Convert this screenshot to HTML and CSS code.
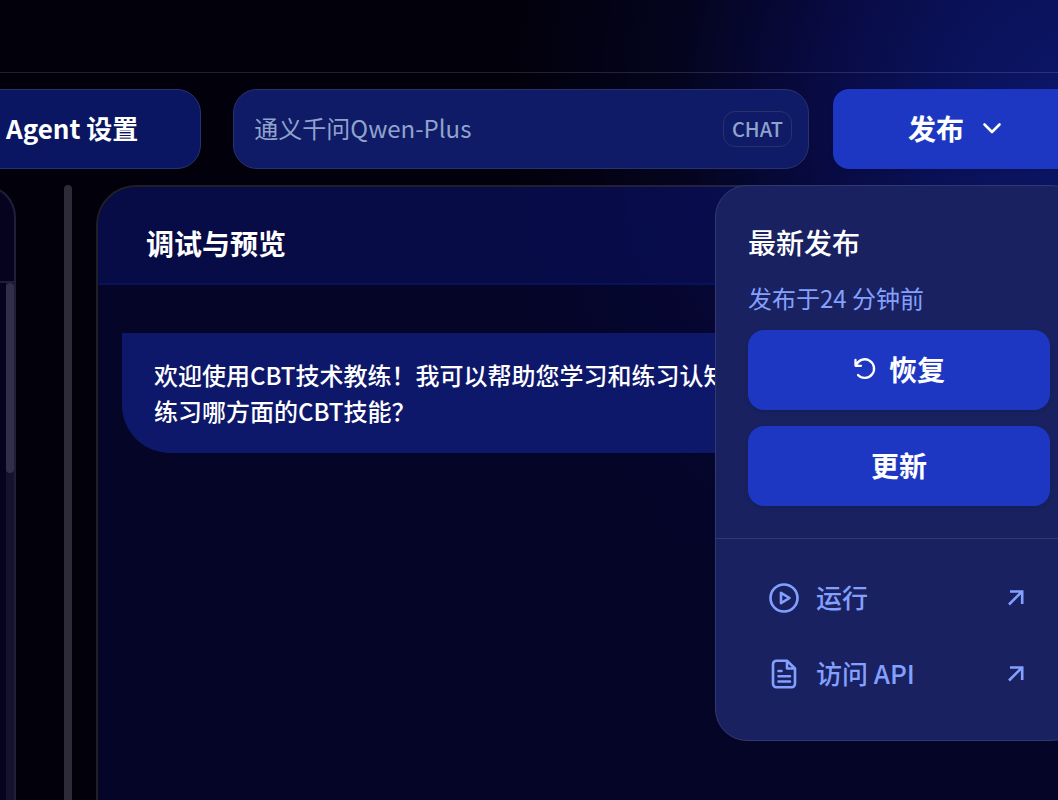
FILE: index.html
```
<!DOCTYPE html>
<html lang="zh-CN">
<head>
  <meta charset="UTF-8">
  <meta name="viewport" content="width=device-width, initial-scale=1">
  <title>调试与预览</title>
  <link rel="stylesheet" href="styles.css">
</head>
<body>
  <div class="app">
    <header class="topbar"></header>

    <div class="toolbar">
      <button type="button" class="agent-btn">Agent 设置</button>

      <button type="button" class="model-select" aria-haspopup="listbox">
        <span class="model-name">通义千问Qwen-Plus</span>
        <span class="badge">CHAT</span>
      </button>

      <div class="publish">
        <button type="button" class="btn publish-btn" aria-expanded="true">
          发布
          <svg class="icon-sm" viewBox="0 0 24 24" aria-hidden="true"><path d="M4.500 8.500l7.500 7.500 7.500-7.500" stroke-width="2.600"/></svg>
        </button>

        <div class="menu">
          <section class="menu-top">
            <h3>最新发布</h3>
            <p>发布于24 分钟前</p>
            <button type="button" class="btn">
              <svg class="icon-sm" viewBox="0 0 24 24" aria-hidden="true"><path d="M2.500 3v5.800h5.500M3 8.500A9.300 9.300 0 1 1 5 18" stroke-width="2.300"/></svg>
              恢复
            </button>
            <button type="button" class="btn">更新</button>
          </section>
          <nav class="menu-links">
            <a href="#">
              <svg class="icon" viewBox="0 0 32 32" aria-hidden="true"><circle cx="16" cy="16" r="13.500"/><path d="M13 10.800v10.400l8.500-5.200z"/></svg>
              <span>运行</span>
              <svg class="icon-arrow" viewBox="0 0 28 28" aria-hidden="true"><path d="M7 20.500L19.500 8M8 7.500h12.200v12.500"/></svg>
            </a>
            <a href="#">
              <svg class="icon" viewBox="0 0 32 32" aria-hidden="true"><path d="M19 2.700H8.500a3.500 3.500 0 0 0-3.500 3.500v19.600a3.500 3.500 0 0 0 3.500 3.500h15a3.500 3.500 0 0 0 3.500-3.500V10.500zM19 2.700V10.500h8M10.500 13h3M10.500 18.200h11.500M10.500 23.500h11.500"/></svg>
              <span>访问 API</span>
              <svg class="icon-arrow" viewBox="0 0 28 28" aria-hidden="true"><path d="M7 20.500L19.500 8M8 7.500h12.200v12.500"/></svg>
            </a>
          </nav>
        </div>
      </div>
    </div>

    <main class="workspace">
      <aside class="config">
        <div class="config-head"></div>
        <div class="config-body">
          <div class="scroll-track"><div class="scroll-thumb"></div></div>
        </div>
      </aside>

      <div class="splitter"></div>

      <section class="preview">
        <h2 class="preview-head">调试与预览</h2>
        <div class="chat">
          <p class="bubble">欢迎使用CBT技术教练！我可以帮助您学习和练习认知<br>练习哪方面的CBT技能？</p>
        </div>
      </section>
    </main>
  </div>
</body>
</html>
```

FILE: styles.css
```
* {
  box-sizing: border-box;
}

body {
  margin: 0;
  font-family: "Noto Sans CJK SC", sans-serif;
  background-color: #02000a;
  color: #fff;
  overflow: hidden;
}

h2, h3, p {
  margin: 0;
}

button {
  font-family: inherit;
  color: inherit;
  cursor: pointer;
}

svg {
  flex: none;
  fill: none;
  stroke: currentColor;
  stroke-width: 2.6;
  stroke-linecap: round;
  stroke-linejoin: round;
}

.app {
  display: flex;
  flex-direction: column;
  height: 100vh;
  background: radial-gradient(circle 580px at calc(100% + 20px) 110px, #0c176a 0%, #0a1158 25%, #080a42 45%, #04041e 70%, #02000a 100%);
}

.topbar {
  flex: none;
  height: 73px;
  border-bottom: 1px solid rgba(255, 255, 255, 0.13);
}

/* toolbar */
.toolbar {
  position: relative;
  z-index: 2;
  display: flex;
  margin: 16px -25px 16px -57px;
}

.agent-btn {
  height: 80px;
  margin-right: 32px;
  padding: 0 62px 3px;
  border: 1px solid #27326f;
  border-radius: 24px;
  background-color: #0a1662;
  font-size: 26px;
  font-weight: 600;
}

.model-select {
  flex: 1;
  display: flex;
  align-items: center;
  justify-content: space-between;
  margin-right: 24px;
  padding: 0 16px 0 20px;
  border: 1px solid #27326f;
  border-radius: 24px;
  background-color: #0f1b66;
  color: #8fa3cc;
  font-size: 24px;
}

.model-name {
  padding-bottom: 4px;
}

.badge {
  height: 36px;
  padding: 0 8px;
  border: 1px solid #27326f;
  border-radius: 12px;
  font-size: 20px;
  font-weight: 500;
  line-height: 34px;
}

.btn {
  display: flex;
  align-items: center;
  justify-content: center;
  gap: 16px;
  width: 100%;
  height: 80px;
  padding: 0 0 2px;
  border: none;
  border-radius: 16px;
  background-color: #1d37c3;
  box-shadow: 0 2px 4px rgba(0, 0, 0, 0.1);
  font-size: 28px;
  font-weight: 600;
}

.publish {
  position: relative;
  width: 250px;
}

.publish-btn {
  padding-right: 4px;
}

.icon-sm {
  width: 24px;
  height: 24px;
}

/* publish menu */
.menu {
  position: absolute;
  top: calc(100% + 16px);
  right: 0;
  width: 368px;
  border: 1px solid #303a70;
  border-radius: 32px;
  background-color: #192160;
}

.menu-top {
  display: flex;
  flex-direction: column;
  gap: 16px;
  padding: 32px;
  border-bottom: 1px solid #303a70;
}

.menu-top h3 {
  font-size: 28px;
  font-weight: 500;
  line-height: 48px;
}

.menu-top p {
  color: #84a0ff;
  font-size: 24px;
  line-height: 32px;
}

.menu-top .btn {
  gap: 12px;
}

.menu-links {
  display: flex;
  flex-direction: column;
  gap: 8px;
  padding: 25px 32px 32px;
}

.menu-links a {
  display: flex;
  align-items: center;
  gap: 16px;
  height: 68px;
  padding: 0 20px;
  color: #84a0ff;
  font-size: 26px;
  font-weight: 500;
  text-decoration: none;
}

.menu-links span {
  flex: 1;
  padding-bottom: 4px;
}

.icon {
  width: 32px;
  height: 32px;
}

.icon-arrow {
  width: 28px;
  height: 28px;
  stroke-linecap: butt;
  stroke-linejoin: miter;
}

/* panels */
.workspace {
  flex: 1;
  display: flex;
  margin: 0 -25px 0 -56px;
}

.config {
  display: flex;
  flex-direction: column;
  width: 72px;
  border: 2px solid #211e3a;
  border-bottom: none;
  border-radius: 32px 32px 0 0;
  background-color: #05031e;
}

.config-head {
  height: 96px;
  border-bottom: 2px solid #211e3a;
}

.config-body {
  flex: 1;
  display: flex;
  justify-content: flex-end;
}

.scroll-track {
  width: 8px;
  background-color: #15112f;
}

.scroll-thumb {
  height: 190px;
  border-radius: 4px;
  background-color: #312d4b;
}

.splitter {
  width: 8px;
  margin: 0 24px 0 48px;
  border-radius: 4px 4px 0 0;
  background-color: #2d2b37;
}

.preview {
  flex: 1;
  border: 2px solid rgba(255, 255, 255, 0.12);
  border-bottom: none;
  border-radius: 40px 40px 0 0;
  background-color: rgba(8, 12, 78, 0.45);
  background-clip: padding-box;
  overflow: hidden;
}

.preview-head {
  padding: 32px 48px 16px;
  border-bottom: 2px solid rgba(10, 22, 110, 0.5);
  background-color: rgba(10, 18, 100, 0.5);
  font-size: 28px;
  font-weight: 700;
  line-height: 48px;
}

.chat {
  padding: 48px 24px;
}

.bubble {
  padding: 24px 32px;
  border-radius: 0 48px 48px 48px;
  background-color: #0e186b;
  font-size: 24px;
  font-weight: 500;
  line-height: 36px;
}
```
